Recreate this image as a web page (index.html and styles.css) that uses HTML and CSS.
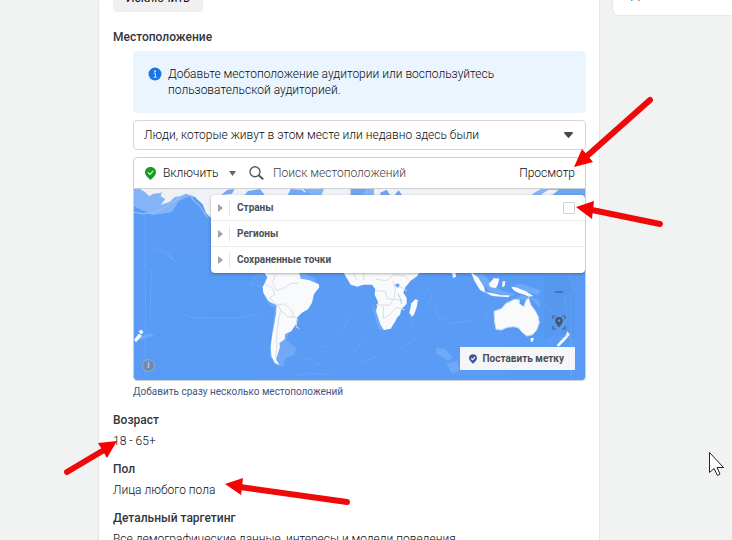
FILE: index.html
```
<!DOCTYPE html>
<html lang="ru">
<head>
    <meta charset="UTF-8">
    <title>Аудитория</title>
    <link rel="stylesheet" href="styles.css">
</head>
<body>
    <div class="page">
        <main class="card">
            <button type="button" class="btn-exclude">Исключить</button>

            <section class="location">
                <h2>Местоположение</h2>
                <div class="location-body">
                    <div class="notice">
                        <svg class="notice-icon" width="14" height="14" viewBox="0 0 14 14">
                            <circle cx="7" cy="7" r="6.5" fill="#1b74e4"/>
                            <circle cx="7" cy="4.2" r="1" fill="#cfe4ff"/>
                            <path d="M5.8 6.2h1.6v4M5.6 10.2h3" fill="none" stroke="#cfe4ff"/>
                        </svg>
                        <p>Добавьте местоположение аудитории или воспользуйтесь пользовательской аудиторией.</p>
                    </div>

                    <label class="people">
                        <select aria-label="Кто находится в этом месте">
                            <option>Люди, которые живут в этом месте или недавно здесь были</option>
                        </select>
                        <svg width="9" height="6" viewBox="0 0 9 6"><path d="M1 0h7q1 0 1 1L5.2 5.6q-.7.6-1.4 0L0 1q0-1 1-1z" fill="#444950"/></svg>
                    </label>

                    <div class="places">
                        <div class="toolbar">
                            <label class="mode">
                                <svg width="11" height="13" viewBox="0 0 11 13">
                                    <path d="M5.500 0C2.400 0 0 2.200 0 5.200 0 8.600 3.200 10.600 5.500 13 7.800 10.600 11 8.600 11 5.200 11 2.200 8.600 0 5.500 0z" fill="#14a01c"/>
                                    <path d="M3 5.500l2 2 3.200-3.600" fill="none" stroke="#d5f3d6" stroke-width="1.200"/>
                                </svg>
                                <select aria-label="Режим">
                                    <option>Включить</option>
                                </select>
                                <svg width="7" height="5" viewBox="0 0 7 5"><path d="M0 0h7L3.500 5z" fill="#606770"/></svg>
                            </label>
                            <label class="search">
                                <svg width="15" height="14" viewBox="0 0 15 14" fill="none" stroke="#555a61">
                                    <circle cx="6" cy="5.800" r="5" stroke-width="1.400"/>
                                    <path d="M9.700 9.300l4.500 4" stroke-width="2"/>
                                </svg>
                                <input type="text" placeholder="Поиск местоположений" aria-label="Поиск местоположений">
                            </label>
                            <button type="button" class="btn-browse">Просмотр</button>
                        </div>

                        <div class="map">
                            <svg class="world" viewBox="0 0 1353 573" preserveAspectRatio="xMidYMid slice">
                                <rect width="1353" height="576" fill="#599bf5"/>
                                <!-- северный берег -->
                                <path d="M0 0h220v28l-55-6-30 14-22 34-58 8L0 52z" fill="#84b4f7"/>
                                <path d="M0 70q55 16 110-26l28-18" fill="none" stroke="#9cc4fa" stroke-width="3"/>
                                <path d="M0 0h1353v24H0z" fill="#84b4f7"/>
                                <path d="M18 0h70l-8 12-22 2-12 8-14-14zM86 0h420l30 26H240l-10 60-14-14-10-26-26-24-24-8-18 8-16 2-14 14-28 10 14-18-14-8 4-14-14-6z" fill="#f0f1f4"/>
                                <path d="M262 18l18-16 22-2-8 14zM330 20l12-14 36-6 16 20zM470 0l34 2 18 20h-62zM505 20l14-18 12 18z" fill="#72a8f5"/>
                                <path d="M560 24l10-24h90l10 24zM720 24V0h500l-20 12-14 12z" fill="#f0f1f4"/>
                                <path d="M650 24V0h46l-8 12 8 12zM738 12l20-10 10 16h-28zM780 20l14-16 10 14zM1250 0h103v24h-123z" fill="#6da4f4"/>
                                <path d="M1222 16l22-14h30l-16 14-18 6z" fill="#f0f1f4"/>
                                <path d="M174 0v30l24 22 22 34" fill="none" stroke="#dcdee2" stroke-width="2"/>
                                <!-- шельф и течения -->
                                <g fill="none" stroke="#75acf8" stroke-width="3" opacity=".6">
                                    <path d="M34 60V560M52 240l-4 160M70 166l30 24 12 14 14 16M60 176l34 16 30 26"/>
                                    <path d="M140 374l46 14 70-2 60 0 60-12M130 400l16 14M350 290l14-26 28-8M340 282l46 12"/>
                                    <path d="M500 505l30 8 28 12-20 4M480 560l50-8 60 6M620 430l34-50M660 490l30-40M560 470l20 6"/>
                                    <path d="M860 320l26-20 8 26-20 24M826 370l14 50M890 360l60 44 70-10M800 480l50-34M905 340l10 60"/>
                                    <path d="M1230 350l30 20 16 60 30-50M1240 470l20-30 40 10M1290 320l10 60M1300 240l20 60-30 30M1150 300l60 12"/>
                                    <path d="M1311 330V576M690 390l30 20M680 520l50-18M1080 350l-30 40"/>
                                </g>
                                <g fill="#70a9f7">
                                    <path d="M388 300q4 46 34 56l-8 80-8 62 16 28 26 8 6-26 28-12 4-20-28-20 8-36 34-50 36-50 10-50-60-32-70-20z"/>
                                    <path d="M904 476l30 4 22 26-12 10-36-20zM936 524l34-8 6 26-20 14zM10 446l40-14 10 8-40 12z"/>
                                    <path d="M1120 340l70-12 30 30-6-26-50-14zM1016 256l50 50 60 18 20-8-50-14-50-46zM1140 290l70 30 10-16-60-20zM712 340l20 76 16 10 8-8z"/>
                                </g>
                                <!-- Южная Америка -->
                                <path transform="translate(-12 213)" d="M404 40l8 12-8 18-6 10 2 18 16 26 24 12-2 26-6 34-6 32-4 34 2 26 10 20 14 8-10-20 6-16 6-20-2-10 16-12 2-16 18-8 14-22 4-20 14-14 18-10 12-20 6-26 16-20-2-10-30-12-24-4-4-16-24-14-16-6-12-10z" fill="#f9fafb"/>
                                <path transform="translate(-12 213)" d="M436 44l-8 24 12 24 26-10 16-12 22 0M406 72l22 12 6 20-16 10 24 20 22-2 20 18 6 18 12 8-4 24 10 6M444 136l8 14-6 30-6 40 0 50-4 20M452 150l20 20 24 2" fill="none" stroke="#dcdee2" stroke-width="3"/>
                                <!-- Африка -->
                                <path transform="translate(648 213)" d="M-22 34h232l-8 14-20 14-16 20-6 16 10 16 0 18-16 16-4 16-8 8-6 12-14 22-20 4-10-14-8-26-6-16 6-28-10-22 2-16-10-14-26 0-18 6-20-6z" fill="#f9fafb"/>
                                <path transform="translate(648 213)" d="M184 130l12-12 8 2-4 22-8 22-6 6-8-12z" fill="#f9fafb"/>
                                <path transform="translate(648 213)" d="M76 58l34 4 22-18 34 4 12 14M80 92l26 2 6 22 20 2 4-30-6-24M78 134l40 2 12-18 30 4M100 138v38l20-12 20-22 24 8M150 80l20 12M10 40l10 20M40 36l2 24" fill="none" stroke="#dcdee2" stroke-width="3"/>
                                <path transform="translate(648 213)" d="M134 76l8-6 8 4-6 10z" fill="#6da4f4"/>
                                <path transform="translate(648 213)" d="M144 100l8 18 2 14" fill="none" stroke="#8fb5ea" stroke-width="2"/>
                                <!-- Азия и Австралия -->
                                <g fill="#f9fafb" transform="translate(648 213)">
                                    <path d="M304 34h12l2 16-8 4zM362 36l22 16 18 28 4 18-16-8-16-26zM404 96l26 4 24 6 24 0-2 6-50-4zM416 72l16-18 16 2-4 16-6 12-16-2zM458 64l8 0-2 14-8 4zM484 80l14 2 30 12 22 14-14 2-12-6-20-6-14-8z"/>
                                    <path d="M432 154l22-8 14-16 14-6 10-6 16 2 0 12 14 8 6-20 8-6 6 20 12 16 10 18 4 20-8 22-12 14-18 4-14-12-10-12-14-4-20 2-18 8-16-2-4-22z" stroke="#c4dbfb" stroke-width="3"/>
                                    <path d="M542 234l10 0-4 12-6-2zM652 214l8 10-16 18-18 18-6-4 14-16 12-12z"/>
                                </g>
                                <path d="M0 452l14-18 10 6-18 20zM14 426l10-4 4 10-8 4z" fill="#f9fafb"/>
                            </svg>

                            <div class="map-tools">
                                <button type="button" aria-label="Уменьшить">
                                    <svg width="14" height="14" viewBox="0 0 14 14"><path d="M3 7h8" stroke="#376dae" stroke-width="1.500"/></svg>
                                </button>
                                <button type="button" aria-label="Моё положение">
                                    <svg width="14" height="16" viewBox="0 0 14 16">
                                        <path d="M1 5V2h3M10 2h3v3M13 12v3h-3M4 15H1v-3" fill="none" stroke="#46658f" stroke-width="1.200"/>
                                        <path d="M7 3a3.800 3.800 0 0 0-3.800 3.800C3.200 9.500 5.500 11 7 13.500 8.500 11 10.800 9.500 10.800 6.800A3.800 3.800 0 0 0 7 3z" fill="#3f5573"/>
                                        <circle cx="7" cy="6.800" r="1.300" fill="#6f93c4"/>
                                    </svg>
                                </button>
                            </div>

                            <ul class="browse">
                                <li>
                                    <button type="button" class="browse-item"><span id="countries">Страны</span></button>
                                    <input type="checkbox" aria-labelledby="countries">
                                </li>
                                <li><button type="button" class="browse-item"><span>Регионы</span></button></li>
                                <li><button type="button" class="browse-item"><span>Сохраненные точки</span></button></li>
                            </ul>

                            <button type="button" class="btn-info" aria-label="Информация">i</button>
                            <button type="button" class="btn-pin">
                                <svg width="8" height="10" viewBox="0 0 11 13">
                                    <path d="M5.500 0C2.400 0 0 2.200 0 5.200 0 8.600 3.200 10.600 5.500 13 7.800 10.600 11 8.600 11 5.200 11 2.200 8.600 0 5.500 0z" fill="#3b5998"/>
                                    <path d="M3 5.500l2 2 3.200-3.600" fill="none" stroke="#fff" stroke-width="1.500"/>
                                </svg>
                                Поставить метку
                            </button>
                        </div>
                    </div>
                    <a href="#" class="add-many">Добавить сразу несколько местоположений</a>
                </div>
            </section>

            <section class="field">
                <h2>Возраст</h2>
                <p>18 - 65+</p>
            </section>
            <section class="field">
                <h2>Пол</h2>
                <p>Лица любого пола</p>
            </section>
            <section class="field">
                <h2>Детальный таргетинг</h2>
                <p>Все демографические данные, интересы и модели поведения</p>
            </section>
        </main>

        <aside class="side">Д</aside>
    </div>

    <!-- стрелки-указатели и курсор поверх страницы -->
    <svg class="marks" width="732" height="540" viewBox="0 0 732 540">
        <g stroke="#ee0a0a" stroke-width="6" stroke-linecap="round">
            <path d="M650 100L587 156M660 224L592 210M67 472L104 450M347 502L240 487"/>
        </g>
        <g fill="#f80000">
            <path d="M574 167l8-18 11 13zM576 207l18-6-2 18zM117 441l-19 2 9 15zM225 484l18-6-2 17z"/>
        </g>
        <path d="M709.500 452.500v20l4.500-4 3.500 7 2.500-1.500-3-6.500h6.500z" fill="#fff" stroke="#222"/>
    </svg>
</body>
</html>
```
FILE: styles.css
```
body{
    margin:0;
    background-color:#f1f3f3;
    color:#0a0b0d;
    font:300 12px/16px Roboto,"Liberation Sans",sans-serif;
}
h2,p,ul{margin:0;padding:0;list-style:none;}
h2{
    color:#33363b;
    font-size:12px;
    line-height:16px;
    font-weight:500;
}
button,select,input{
    margin:0;
    padding:0;
    border:none;
    background:none;
    color:inherit;
    font:inherit;
}
button,select{cursor:pointer;}
select{
    appearance:none;
    min-width:0;
}
svg{
    display:block;
    flex:none;
}

.page{
    display:grid;
    grid-template-columns:minmax(0,1fr) 119px;
    gap:14px;
    align-items:start;
    height:100vh;
    padding-left:99px;
    overflow:hidden;
}
.card{
    padding:0 13px 0 14px;
    background-color:#fff;
    box-shadow:0 0 2px rgba(0,0,0,.15);
}
.side{
    margin-top:-16px;
    padding:3px 18px 12px;
    border-radius:0 0 0 6px;
    background-color:#fff;
    box-shadow:0 0 2px rgba(0,0,0,.15);
}

.btn-exclude{
    display:block;
    height:28px;
    margin-top:-16px;
    padding:0 13px;
    border-radius:4px;
    background-color:#f0f0f0;
    font-weight:400;
}
.location{margin-top:17px;}
.location-body{
    display:flex;
    flex-direction:column;
    gap:7px;
    margin-top:6px;
    padding-left:20px;
}
.notice{
    display:flex;
    gap:6px;
    padding:15px 60px 15px 15px;
    border-radius:4px;
    background-color:#ebf5ff;
}
.notice-icon{margin-top:1px;}

.people{
    display:flex;
    align-items:center;
    height:28px;
    padding:0 12px 0 10px;
    border:1px solid #d4d6da;
    border-radius:4px;
}
.people select{flex:1;}

.places{
    border:1px solid #ccd0d5;
    border-radius:4px;
    overflow:hidden;
}
.toolbar{
    display:flex;
    align-items:center;
    gap:13px;
    height:30px;
    padding:0 10px 0 11px;
    border-bottom:1px solid #ccd0d5;
}
.mode,
.search{
    display:flex;
    align-items:center;
}
.mode{gap:7px;}
.mode svg:last-child{margin-left:3px;}
.search{
    flex:1;
    gap:9px;
}
.search input{
    flex:1;
    min-width:0;
    outline:none;
}
.search input::placeholder{
    color:#3c4047;
    opacity:1;
}

.map{
    position:relative;
    height:191px;
}
.world{
    width:100%;
    height:100%;
}
.browse{
    position:absolute;
    top:6px;
    left:77px;
    right:0;
    padding-bottom:1px;
    border-radius:4px;
    background-color:#fff;
    box-shadow:0 1px 3px rgba(0,0,0,.3);
}
.browse li{
    display:flex;
    align-items:center;
    height:25px;
    padding-right:10px;
}
.browse li + li{border-top:1px solid #e9eaec;}
.browse-item{
    display:flex;
    flex:1;
    align-items:center;
    color:#4b4f56;
    font-size:10px;
    font-weight:bold;
}
.browse-item::before{
    content:'';
    margin:0 6px 0 7px;
    border:solid transparent;
    border-width:4px 0 4px 5px;
    border-left-color:#a0a3a8;
}
.browse-item span{
    padding-left:7px;
    border-left:1px solid #e6e7ea;
}
.browse input{
    appearance:none;
    width:12px;
    height:12px;
    border:1px solid #ccd0d5;
    border-radius:1px;
    background-color:#fff;
}
.map-tools{
    position:absolute;
    right:11px;
    bottom:43px;
    width:30px;
    background-color:rgba(60,110,180,.08);
}
.map-tools button{
    display:flex;
    align-items:center;
    justify-content:center;
    width:100%;
    height:30px;
}
.btn-info{
    position:absolute;
    left:8px;
    bottom:8px;
    width:13px;
    height:13px;
    border:1px solid #94aed4;
    border-radius:50%;
    background-color:#7189ae;
    color:#b9cbe6;
    font-size:9px;
    font-weight:bold;
    line-height:11px;
}
.btn-pin{
    position:absolute;
    right:10px;
    bottom:10px;
    display:flex;
    align-items:center;
    gap:6px;
    height:23px;
    padding:0 11px 0 9px;
    background-color:#f4f6f9;
    color:#4b4f56;
    font-size:10px;
    font-weight:bold;
}
.add-many{
    margin-top:-4px;
    color:#3f5585;
    font-size:10px;
    font-weight:400;
    text-decoration:none;
}
.field{margin-top:12px;}
.field p{margin-top:5px;}

.marks{
    position:absolute;
    top:0;
    left:0;
    pointer-events:none;
}
```
